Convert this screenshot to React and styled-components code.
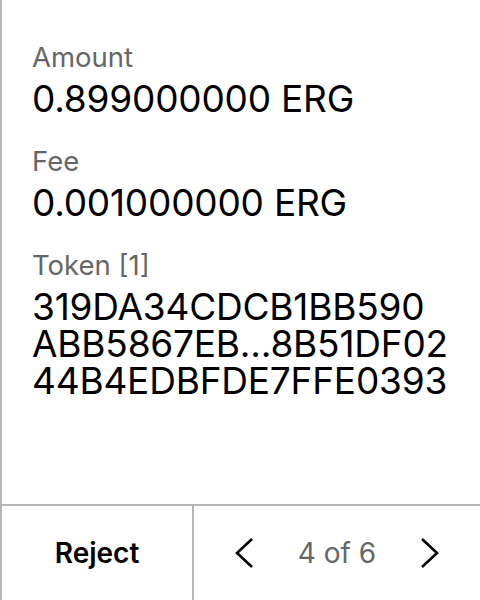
import React from "react";
import styled, { createGlobalStyle } from "styled-components";

const GlobalStyle = createGlobalStyle`
  html, body {
    margin: 0;
    padding: 0;
    background: #fff;
  }
  body {
    font-family: Inter, "Noto Sans", sans-serif;
    -webkit-font-smoothing: antialiased;
  }
`;

const Screen = styled.div`
  width: 480px;
  height: 600px;
  box-sizing: border-box;
  border-left: 2px solid #b5b5b5;
  display: flex;
  flex-direction: column;
`;

const Body = styled.div`
  flex: 1;
  padding: 39px 0 0 30px;
  display: flex;
  flex-direction: column;
  gap: 26px;
`;

const Field = styled.div`
  display: flex;
  flex-direction: column;
`;

const Label = styled.div`
  font-size: 27.5px;
  line-height: 36px;
  color: #666;
  margin-bottom: 5px;
`;

const Value = styled.div`
  font-size: 37px;
  line-height: 37px;
  color: #000;
  letter-spacing: -0.2px;
`;

const Footer = styled.div`
  height: 96px;
  box-sizing: border-box;
  border-top: 2px solid #b5b5b5;
  display: flex;
`;

const RejectButton = styled.button`
  width: 192px;
  border: none;
  border-right: 2px solid #b5b5b5;
  background: none;
  font-family: inherit;
  font-size: 28px;
  font-weight: 600;
  color: #000;
  padding: 0;
`;

const Pager = styled.div`
  flex: 1;
  display: flex;
  align-items: center;
  justify-content: space-between;
  padding: 0 40px 0 40px;
`;

const PageText = styled.span`
  font-size: 28px;
  color: #666;
`;

const Chevron = ({ dir }) => (
  <svg width="20" height="32" viewBox="0 0 20 32">
    <path
      d={dir === "left" ? "M18 2 L3 16 L18 30" : "M2 2 L17 16 L2 30"}
      fill="none"
      stroke="#000"
      strokeWidth="2.6"
    />
  </svg>
);

const fields = [
  { label: "Amount", value: ["0.899000000 ERG"] },
  { label: "Fee", value: ["0.001000000 ERG"] },
  {
    label: "Token [1]",
    value: ["319DA34CDCB1BB590", "ABB5867EB...8B51DF02", "44B4EDBFDE7FFE0393"],
  },
];

export default function App() {
  return (
    <>
      <GlobalStyle />
      <Screen>
        <Body>
          {fields.map((f) => (
            <Field key={f.label}>
              <Label>{f.label}</Label>
              {f.value.map((line) => (
                <Value key={line}>{line}</Value>
              ))}
            </Field>
          ))}
        </Body>
        <Footer>
          <RejectButton>Reject</RejectButton>
          <Pager>
            <Chevron dir="left" />
            <PageText>4 of 6</PageText>
            <Chevron dir="right" />
          </Pager>
        </Footer>
      </Screen>
    </>
  );
}
